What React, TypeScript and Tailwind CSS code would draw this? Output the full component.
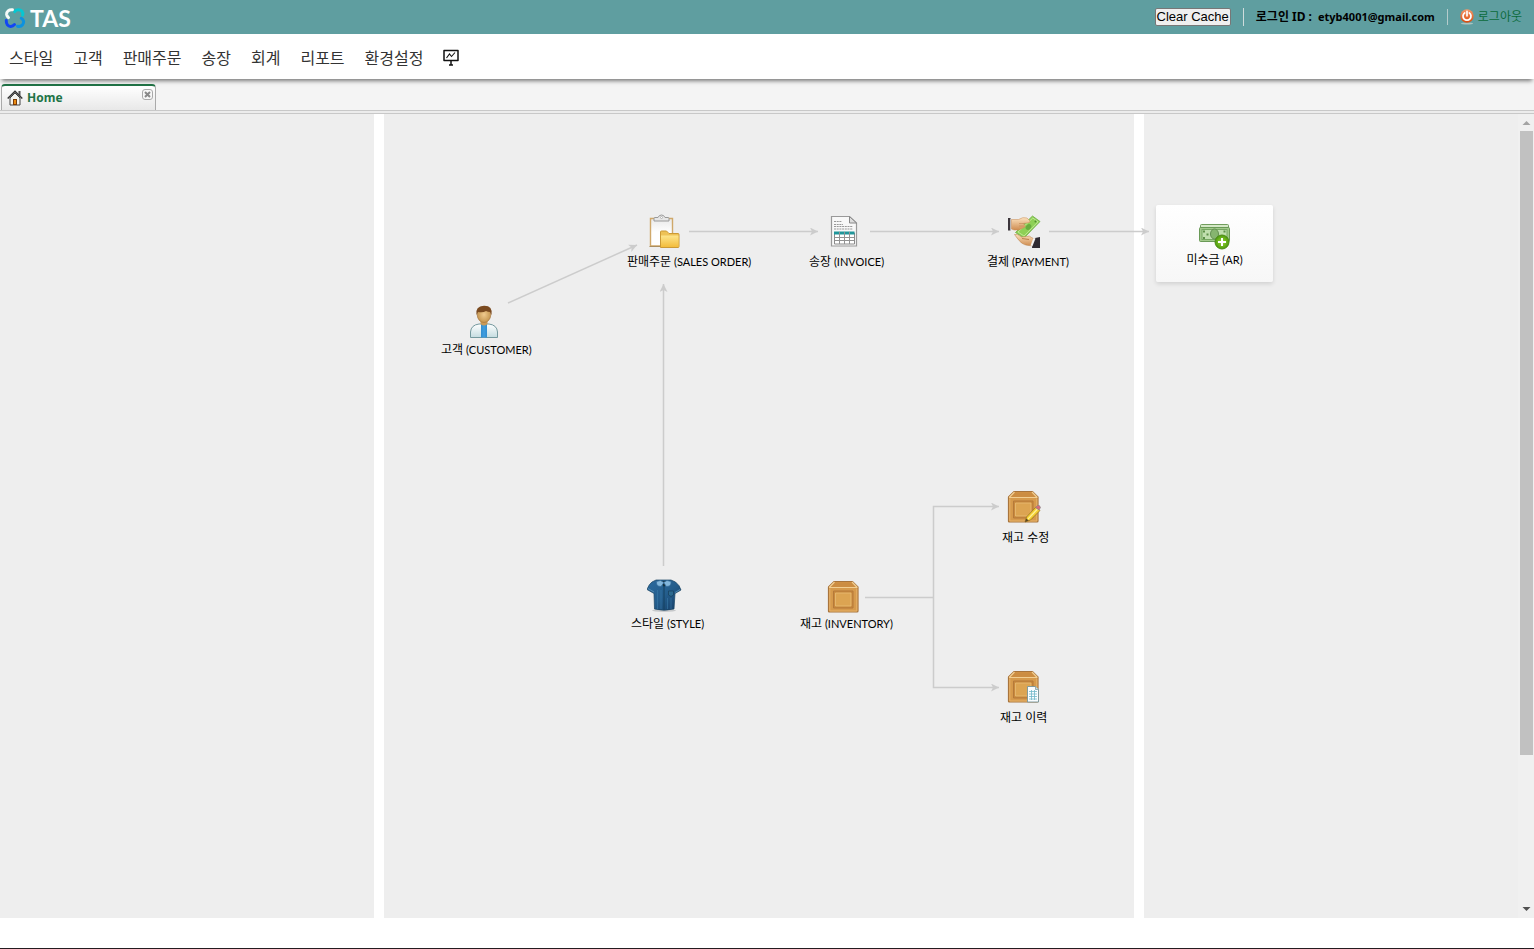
import React from "react";

const menu = ["스타일", "고객", "판매주문", "송장", "회계", "리포트", "환경설정"];

function Logo() {
  return (
    <svg width="22" height="22" viewBox="0 0 22 22" fill="none" strokeWidth="3" strokeLinecap="round" aria-hidden="true">
      <path d="M8.500 2.800C5 2.300 2.300 4.500 2.600 7.500C2.800 9 3.600 9.800 4.500 10.600" stroke="#f4fbf8" />
      <path d="M10.800 4.600C12 2.400 15.800 2 17.800 4C19 5.300 19 6.800 18.600 8.200" stroke="#06c7d2" />
      <path d="M2.300 13.500C2 17 4 19.600 6.800 19.400C8.800 19.300 9.600 18.500 10.500 17.500" stroke="#1246f5" />
      <path d="M17.300 11.200C20 12.800 20.300 15.800 18.600 17.700C17.200 19.400 15 19.600 13.500 19.200" stroke="#0d92e0" />
    </svg>
  );
}

function HomeIcon() {
  return (
    <svg width="16" height="16" viewBox="0 0 16 16" aria-hidden="true">
      <path d="M11.500 1h2v5l-2-2z" fill="#555" />
      <path d="M3 8L8 3l5 5v7H3z" fill="#f4f4f0" stroke="#444" />
      <path d="M.7 8.500L8 1.300l7.300 7.200" fill="none" stroke="#333" strokeWidth="1.500" />
      <path d="M6 9h4v6H6z" fill="#7a3c08" />
      <path d="M7 10h2v4H7z" fill="#e98a12" />
    </svg>
  );
}

function CloseIcon() {
  return (
    <svg width="11" height="11" viewBox="0 0 11 11" aria-hidden="true">
      <rect x=".5" y=".5" width="10" height="10" rx="2.500" fill="#f7f7f7" stroke="#aaa" />
      <path d="M3 3l5 5M8 3L3 8" stroke="#888" strokeWidth="2" />
    </svg>
  );
}

function BoardIcon() {
  return (
    <svg width="16" height="17" viewBox="0 0 16 17" fill="none" stroke="#111" aria-hidden="true">
      <path d="M1 1.500h14v10H1z" strokeWidth="1.500" strokeLinejoin="round" />
      <path d="M3.500 9L6.500 5L8.500 7.500L12 3.500" strokeWidth="1.100" />
      <path d="M8 11.500v4.500" strokeWidth="1.500" />
      <path d="M6 16h4" strokeWidth="1.500" />
    </svg>
  );
}

function PowerIcon() {
  return (
    <svg width="14" height="16" viewBox="0 0 14 16" aria-hidden="true">
      <defs>
        <linearGradient id="power" x1="0" y1="0" x2="0" y2="1">
          <stop offset="0" stopColor="#f49a6b" />
          <stop offset="1" stopColor="#d84a0c" />
        </linearGradient>
      </defs>
      <ellipse cx="7" cy="14.500" rx="6" ry="1" fill="#a9c4c0" />
      <circle cx="7" cy="7" r="6.700" fill="url(#power)" />
      <path d="M4.700 3.900a4 4 0 1 0 4.600 0M7 2.300v4.500" fill="none" stroke="#fff" strokeWidth="1.700" strokeLinecap="round" />
    </svg>
  );
}

function ClipboardIcon() {
  return (
    <svg width="36" height="36" viewBox="0 0 36 36" aria-hidden="true">
      <defs>
        <linearGradient id="paper" x1="0" y1="0" x2="0" y2="1">
          <stop offset="0" stopColor="#e9e9e9" />
          <stop offset=".5" stopColor="#fefefe" />
        </linearGradient>
        <linearGradient id="folder" x1="0" y1="0" x2="0" y2="1">
          <stop offset="0" stopColor="#fde58c" />
          <stop offset="1" stopColor="#f3bd3c" />
        </linearGradient>
      </defs>
      <path d="M3.500 4.500h22v27.500h-22z" fill="url(#paper)" stroke="#cfa86a" strokeWidth="1.400" />
      <path d="M2.500 32.500h12" stroke="#a98d5f" />
      <path d="M7 7V4.500q0-1 1-1h3q1-2.500 3.500-2.500T18 3.500h3q1 0 1 1V7z" fill="#e6e6e6" stroke="#999" />
      <circle cx="14.500" cy="3.500" r="1" fill="#fff" stroke="#999" strokeWidth=".6" />
      <path d="M13.500 33.500V18q0-1 1-1h5l2.500 2.500h9q1 0 1 1v12q0 1-1 1z" fill="#eec257" stroke="#cc9a35" />
      <path d="M14 21.500h17.500v11.500H14z" fill="url(#folder)" />
    </svg>
  );
}

function InvoiceIcon() {
  return (
    <svg width="36" height="36" viewBox="0 0 36 36" aria-hidden="true">
      <path d="M4.500 2.500h18l7 6.500v23h-25z" fill="#f8f8f8" stroke="#999" strokeWidth="1.200" />
      <path d="M22.500 2.500V9h7z" fill="#ddd" stroke="#888" />
      <path d="M7 7.500h8M7 10.500h9M7 12.500h19M7 15h19" stroke="#999" strokeDasharray="2 .7" />
      <path d="M7.500 19h20v11h-20z" fill="#fff" stroke="#8a8a8a" />
      <path d="M7 17.500h20.500v3H7z" fill="#20969a" />
      <path d="M7.500 23.500h20M7.500 26.500h20M12.500 18v12M17.500 18v12M22.500 18v12" stroke="#929292" />
    </svg>
  );
}

function PaymentIcon() {
  return (
    <svg width="36" height="36" viewBox="0 0 36 36" aria-hidden="true">
      <defs>
        <linearGradient id="skin" x1="0" y1="0" x2="0" y2="1">
          <stop offset="0" stopColor="#fce3c0" />
          <stop offset="1" stopColor="#cf8c50" />
        </linearGradient>
      </defs>
      <path d="M25.500 2L33 7.500L17 24L8.500 18.500z" fill="#8ed056" stroke="#6cab42" strokeWidth=".8" />
      <path d="M25.800 4L31 7.800L17 22L11 18z" fill="none" stroke="#c2eb98" strokeWidth=".9" />
      <ellipse cx="21.500" cy="13" rx="3.200" ry="2.400" transform="rotate(-45 21.500 13)" fill="#68ac3e" />
      <circle cx="28.500" cy="7.500" r="1" fill="#4f8f2b" />
      <path d="M1 4h2.500v12.500H1z" fill="#3b353b" />
      <path d="M3.500 5h1v11h-1z" fill="#d9d9d9" />
      <path d="M4.500 5.500h7Q16 2.500 20 4l3 3q0 2-3 2l-4 .5 2 2q1 1.500-2 2.500l-4 2H7l-2.500-1z" fill="url(#skin)" stroke="#c78a55" strokeWidth=".5" />
      <path d="M12 9.500h6M12 12h5" stroke="#c48955" strokeWidth=".6" />
      <path d="M7.500 20.500q3-1 7 2.500l5-.5q3-1.500 5 1l5 2.500-2 5.500q-8 1-13-2.500-4-4-7-8.500z" fill="url(#skin)" stroke="#b77a42" strokeWidth=".5" />
      <path d="M15 24.500l7 1" stroke="#a8632f" strokeWidth=".7" />
      <path d="M28 24l5-1v11h-8q0-5 3-10z" fill="#302b32" />
      <path d="M26.500 24l2 .5-3 7.500-2-.6z" fill="#f5f5f5" />
    </svg>
  );
}

function CustomerIcon() {
  return (
    <svg width="36" height="36" viewBox="0 0 36 36" aria-hidden="true">
      <defs>
        <linearGradient id="coat" x1="0" y1="0" x2="0" y2="1">
          <stop offset="0" stopColor="#ffffff" />
          <stop offset="1" stopColor="#c4dce0" />
        </linearGradient>
        <radialGradient id="face">
          <stop offset="0" stopColor="#f0ca8e" />
          <stop offset="1" stopColor="#c59650" />
        </radialGradient>
      </defs>
      <path d="M3.500 33.500V28Q4 21 12 20h10q8 1 8.500 8v5.500z" fill="url(#coat)" stroke="#74999e" />
      <path d="M14 20h6v13.500h-6z" fill="#3d9bdc" />
      <path d="M14 20h1.500v13.500H14zM18.500 20H20v13.500h-1.500z" fill="#2c86c7" opacity=".5" />
      <path d="M13.500 15h7v5q-3.500 3-7 0z" fill="#ca9a58" />
      <ellipse cx="17" cy="10.500" rx="6.800" ry="8" fill="url(#face)" stroke="#a87942" strokeWidth=".7" />
      <path d="M9.500 11Q8 2 17 1.800T24.500 11l-1.500-3q-2 0-4-1-3 2-8 1z" fill="#7a4a20" />
    </svg>
  );
}

function ShirtIcon() {
  return (
    <svg width="36" height="36" viewBox="0 0 36 36" aria-hidden="true">
      <defs>
        <linearGradient id="cloth" x1="0" y1="0" x2="1" y2="1">
          <stop offset="0" stopColor="#2c6a9e" />
          <stop offset=".5" stopColor="#245e8d" />
          <stop offset="1" stopColor="#163c65" />
        </linearGradient>
      </defs>
      <ellipse cx="17" cy="32.500" rx="12" ry="1.500" fill="#c6c8ca" />
      <path d="M9 2h15l4.500 2q4 3 5.500 8l-6 3.500-1 15.500q-10 2.500-19.500 0L7 15.500 0 11.500Q2 6 5 4z" fill="url(#cloth)" stroke="#194361" strokeWidth=".7" />
      <path d="M13 3h8l-4 6z" fill="#16303d" />
      <path d="M9.500 3.500Q9 6.500 11 8l3 .5 3-4-3.500-2zM24 3.500q.5 3-1.500 4.500l-3 .5-3-4 3.500-2z" fill="#83b7dc" stroke="#376d99" strokeWidth=".7" />
      <path d="M17 8v24" stroke="#14405f" />
      <path d="M21.500 13h5v4l-2.500 1.500-2.500-1.500z" fill="#2c698f" stroke="#173e5a" strokeWidth=".7" />
      <path d="M10.500 12v19M14 12v19M20.500 20v11M24 20v11" stroke="#397ba7" strokeWidth=".6" />
      <path d="M1 10.500l6 3.500M33 11.500l-5 3" stroke="#6197bb" strokeWidth=".8" />
    </svg>
  );
}

function CrateIcon({ extra }: { extra?: "pencil" | "sheet" }) {
  return (
    <svg width="36" height="36" viewBox="0 0 36 36" aria-hidden="true">
      <path d="M2.500 9L8 3.500h18.500L32 9v24q0 1-1 1H3.500q-1 0-1-1z" fill="#d69a4c" stroke="#a8743c" strokeWidth="1.200" />
      <path d="M3.500 9L8.300 4.200h18L31 9z" fill="#cc8d42" />
      <path d="M3.200 9.500L8.500 4M31.300 9.500L26 4M3 9.500h28.500" fill="none" stroke="#f2cf92" strokeWidth="1.200" />
      <path d="M3.800 10.500v22.500h27V10.500" fill="none" stroke="#e6b36b" />
      <path d="M7.500 13h19.500v17H7.500z" fill="#c98a3d" stroke="#b5793a" />
      <path d="M9.500 15h15.500v13H9.500z" fill="#dca452" stroke="#e9bc77" strokeWidth=".8" />
      {extra === "pencil" && (
        <g>
          <path d="M19 34l1.500-5L30 19l4 3.500L24.500 32z" fill="#f4cf32" stroke="#987320" strokeWidth=".8" />
          <path d="M22 31l9.500-10" stroke="#fff29a" strokeWidth="1.200" />
          <path d="M29.500 19.500l2-2q2-1 3 2l-1.500 2.500z" fill="#d96b76" stroke="#88868a" strokeWidth=".7" />
          <path d="M19 34l1.200-3.500 2.500 2z" fill="#5b4429" />
        </g>
      )}
      {extra === "sheet" && (
        <g>
          <path d="M21.500 18.500h8l3 3v12.500h-11z" fill="#fafdff" stroke="#76949a" strokeWidth=".9" />
          <path d="M29.500 18.500v3h3" fill="#cde1e4" stroke="#76949a" strokeWidth=".7" />
          <path d="M23 23.500h8M23 26h8M23 28.500h8M23 31h8M25.500 22v10M28.500 22v10" stroke="#70b8c9" strokeWidth=".8" />
        </g>
      )}
    </svg>
  );
}

function CashIcon() {
  return (
    <svg width="36" height="28" viewBox="0 0 36 28" aria-hidden="true">
      <defs>
        <radialGradient id="plus">
          <stop offset="0" stopColor="#9fd83c" />
          <stop offset="1" stopColor="#4c9b0b" />
        </radialGradient>
      </defs>
      <rect x="3.500" y="2.500" width="28" height="17" rx="1" fill="#d4e8c6" stroke="#719d5d" />
      <rect x="2.500" y="5.500" width="30" height="14" rx="1" fill="#a3ca8c" stroke="#6a9a57" />
      <rect x="5" y="7.500" width="25" height="10" fill="#c0dfae" stroke="#76a862" />
      <ellipse cx="17.500" cy="12" rx="4" ry="5" fill="#86b56f" stroke="#648f52" />
      <path d="M6 8.500h2v2H6zM6 15h2v2H6zM26.500 8.500h2v2h-2zM9.500 11.500h2v2h-2z" fill="#5d9048" />
      <circle cx="25" cy="20" r="7" fill="url(#plus)" stroke="#4d8b18" />
      <path d="M25 16v8M21 20h8" stroke="#fff" strokeWidth="2" />
    </svg>
  );
}

type NodeProps = {
  place: string;
  iconPad: string;
  labelGap: string;
  name: string;
  code?: string;
  children: React.ReactNode;
};

function FlowNode({ place, iconPad, labelGap, name, code, children }: NodeProps) {
  return (
    <button type="button" className={`absolute flex flex-col items-start whitespace-nowrap text-black ${place}`}>
      <span className={iconPad}>{children}</span>
      <span className={`text-xs leading-5 ${labelGap}`}>
        {name}
        {code && <span className="font-[Lato,'Noto_Sans',sans-serif] text-[11px]"> ({code})</span>}
      </span>
    </button>
  );
}

function Connectors() {
  return (
    <svg width="1160" height="620" viewBox="0 0 1160 620" fill="none" stroke="#cccccc" strokeWidth="1.500" className="pointer-events-none absolute left-0 top-0" aria-hidden="true">
      <defs>
        <marker id="tip" markerUnits="userSpaceOnUse" markerWidth="10" markerHeight="10" refX="8" refY="4" orient="auto">
          <path d="M0 0l8 4-8 4 2-4z" fill="#cccccc" stroke="none" />
        </marker>
      </defs>
      <g markerEnd="url(#tip)">
        <path d="M508 189L637 131" />
        <path d="M689 117.500H818" />
        <path d="M870 117.500H999" />
        <path d="M1049 117.500H1149" />
        <path d="M663.500 452V170" />
        <path d="M933.500 483V392.500H999" />
        <path d="M933.500 483V573.500H999" />
      </g>
      <path d="M865 483.500h68" />
    </svg>
  );
}

export default function App() {
  return (
    <div className="flex min-h-screen flex-col border-b border-[#241c20] bg-white font-['Noto_Sans','Noto_Sans_CJK_KR',sans-serif]">
      <header className="flex h-[34px] items-center justify-between bg-[#5f9ea0] pl-1 pr-3">
        <a href="#home" className="flex items-center gap-1 pt-0.5 font-[Lato,sans-serif] text-[23px] leading-8 font-bold text-white">
          <Logo />
          TAS
        </a>
        <div className="flex items-center text-xs leading-4">
          <button type="button" className="rounded-xs border border-[#777] bg-[#efefef] px-px font-['Liberation_Sans',sans-serif] text-[13px] leading-4 text-black">
            Clear Cache
          </button>
          <span className="ml-3 h-[18px] border-l border-[#cfdcdc]" />
          <span className="ml-3 flex items-baseline gap-1.5 font-bold text-black">
            로그인 ID :<span className="text-[11px]">etyb4001@gmail.com</span>
          </span>
          <span className="ml-3 h-4 border-l border-[#b5cccc]" />
          <a href="#logout" className="ml-3 flex items-center gap-1 text-[#0b6b3c]">
            <PowerIcon />
            로그아웃
          </a>
        </div>
      </header>

      <nav className="relative z-10 flex h-[45px] items-center gap-5 bg-white px-[9px] pt-0.5 text-base leading-6 text-[#333] shadow-[0_4px_4px_-2px_rgba(0,0,0,0.5)]">
        {menu.map((item) => (
          <a key={item} href={`#${item}`}>
            {item}
          </a>
        ))}
        <button type="button" aria-label="Dashboard">
          <BoardIcon />
        </button>
      </nav>

      <div className="flex h-8 items-end border-b border-[#c8c8c8] bg-[#f4f4f4] px-px">
        <div className="flex h-[26px] w-[155px] items-center justify-between rounded-t-sm border-x border-t-2 border-x-[#aaa] border-t-[#217346] bg-gradient-to-b from-white to-[#e8e8e8] pl-[5px] pr-0.5">
          <a href="#home" className="flex items-center gap-1 text-xs leading-4 font-bold text-[#217346]">
            <HomeIcon />
            Home
          </a>
          <button type="button" aria-label="Close tab" className="mb-2">
            <CloseIcon />
          </button>
        </div>
      </div>
      <div className="h-[3px] border-b border-[#c8c8c8] bg-[#ececec]" />

      <main className="mb-[30px] flex flex-1">
        <div className="relative flex min-h-[640px] flex-1 gap-2.5">
          <section className="w-[374px] shrink-0 bg-[#eeeeee]" />
          <section className="w-[750px] shrink-0 bg-[#eeeeee]" />
          <section className="flex-1 bg-[#eeeeee]" />

          <Connectors />
          <FlowNode place="left-[441px] top-[190px]" iconPad="pl-[26px]" labelGap="" name="고객" code="CUSTOMER">
            <CustomerIcon />
          </FlowNode>
          <FlowNode place="left-[627px] top-[100px]" iconPad="pl-5" labelGap="mt-0.5" name="판매주문" code="SALES ORDER">
            <ClipboardIcon />
          </FlowNode>
          <FlowNode place="left-[809px] top-[100px]" iconPad="pl-[18px]" labelGap="mt-0.5" name="송장" code="INVOICE">
            <InvoiceIcon />
          </FlowNode>
          <FlowNode place="left-[987px] top-[100px]" iconPad="pl-5" labelGap="mt-0.5" name="결제" code="PAYMENT">
            <PaymentIcon />
          </FlowNode>
          <FlowNode place="left-[631px] top-[464px]" iconPad="pl-4" labelGap="" name="스타일" code="STYLE">
            <ShirtIcon />
          </FlowNode>
          <FlowNode place="left-[800px] top-[464px]" iconPad="pl-[26px]" labelGap="" name="재고" code="INVENTORY">
            <CrateIcon />
          </FlowNode>
          <FlowNode place="left-[1002px] top-[374px]" iconPad="pl-1" labelGap="mt-1" name="재고 수정">
            <CrateIcon extra="pencil" />
          </FlowNode>
          <FlowNode place="left-[1000px] top-[554px]" iconPad="pl-1.5" labelGap="mt-1" name="재고 이력">
            <CrateIcon extra="sheet" />
          </FlowNode>
          <button type="button" className="absolute left-[1156px] top-[91px] flex h-[77px] w-[117px] flex-col items-center justify-center rounded-xs bg-gradient-to-b from-white to-[#f7f7f7] pt-1 text-xs leading-5 text-black shadow-[0_2px_4px_rgba(0,0,0,0.12)]">
            <CashIcon />
            <span>
              미수금<span className="font-[Lato,'Noto_Sans',sans-serif] text-[11px]"> (AR)</span>
            </span>
          </button>
        </div>
        <div className="flex w-4 flex-col items-center bg-[#f0f0f0]" aria-hidden="true">
          <svg width="16" height="17" viewBox="0 0 16 17">
            <path d="M4.500 11L8.500 7l4 4z" fill="#a3a3a3" />
          </svg>
          <div className="ml-px flex w-[13px] flex-1 flex-col">
            <div className="h-[81%] bg-[#c1c1c1]" />
          </div>
          <svg width="16" height="17" viewBox="0 0 16 17">
            <path d="M4.500 6L8.500 10l4-4z" fill="#505050" />
          </svg>
        </div>
      </main>
    </div>
  );
}
